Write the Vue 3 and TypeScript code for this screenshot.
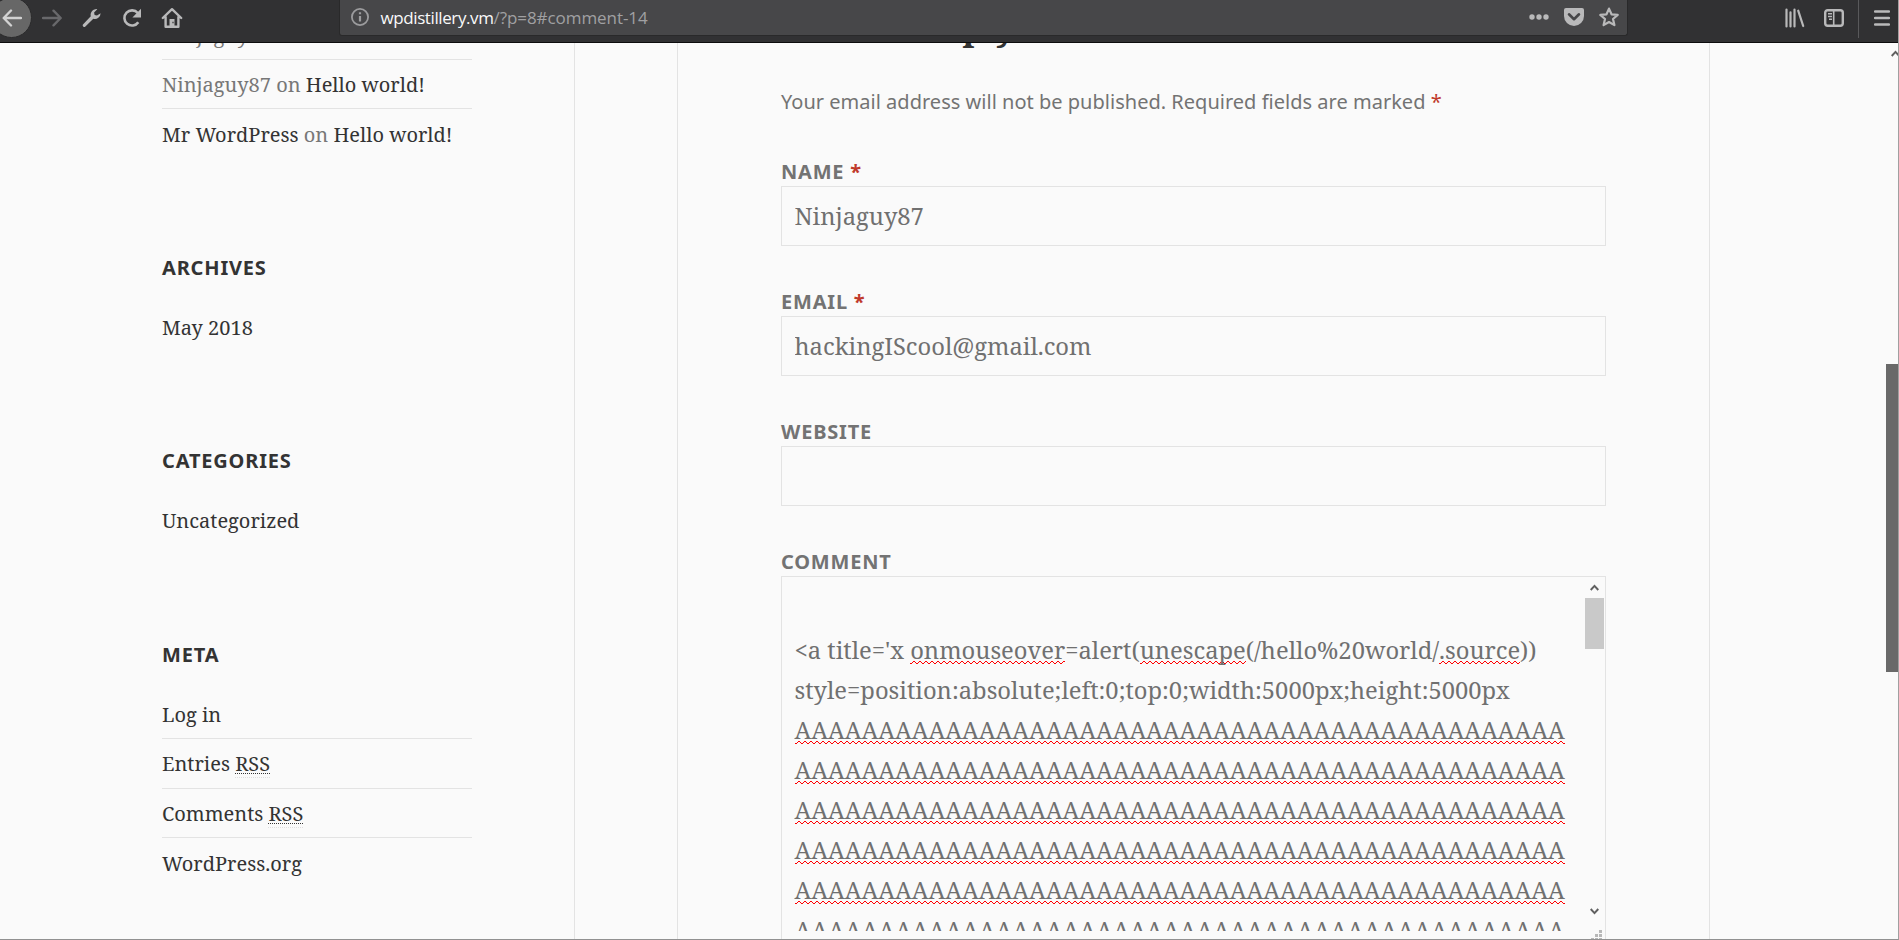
<script setup lang="ts">
interface Part {
  text: string
  kind?: 'muted' | 'abbr' | 'wavy'
}
interface Widget {
  title?: string
  items: Part[][]
}

const widgets: Widget[] = [
  {
    items: [
      [{ text: 'Ninjaguy87', kind: 'muted' }],
      [{ text: 'Ninjaguy87 on ', kind: 'muted' }, { text: 'Hello world!' }],
      [{ text: 'Mr WordPress' }, { text: ' on ', kind: 'muted' }, { text: 'Hello world!' }],
    ],
  },
  { title: 'Archives', items: [[{ text: 'May 2018' }]] },
  { title: 'Categories', items: [[{ text: 'Uncategorized' }]] },
  {
    title: 'Meta',
    items: [
      [{ text: 'Log in' }],
      [{ text: 'Entries ' }, { text: 'RSS', kind: 'abbr' }],
      [{ text: 'Comments ' }, { text: 'RSS', kind: 'abbr' }],
      [{ text: 'WordPress.org' }],
    ],
  },
]

const fields = [
  { id: 'name', label: 'Name', required: true, value: 'Ninjaguy87' },
  { id: 'email', label: 'Email', required: true, value: 'hackingIScool@gmail.com' },
  { id: 'website', label: 'Website', required: false, value: '' },
]

const filler: Part[][] = Array.from({ length: 6 }, () => [{ text: 'A'.repeat(46), kind: 'wavy' }])
const commentLines: Part[][] = [
  [],
  [
    { text: "<a title='x " },
    { text: 'onmouseover', kind: 'wavy' },
    { text: '=alert(' },
    { text: 'unescape', kind: 'wavy' },
    { text: '(/hello%20world/' },
    { text: '.source', kind: 'wavy' },
    { text: '))' },
  ],
  [{ text: 'style=position:absolute;left:0;top:0;width:5000px;height:5000px' }],
  ...filler,
]
</script>

<template>
  <div class="window">
    <header class="toolbar">
      <div class="nav">
        <span class="back">
          <svg width="20" height="20" viewBox="0 0 20 20"><path d="M19 10H2.5M9 2.5 1.7 10 9 17.5" /></svg>
        </span>
        <svg class="forward" width="20" height="20" viewBox="0 0 20 20"><path d="M1 10h17M11.5 2.7 18.7 10l-7.2 7.3" /></svg>
        <svg class="wrench" width="20" height="20" viewBox="0 0 20 20">
          <path class="fill" d="M18.6 5.2 15 7.6l-2.4-.6-.5-2.4L15.3 1.2A5.7 5.7 0 0 0 8.8 8.3L1.2 16.2a1.5 1.5 0 0 0 2.2 2.2L11.3 10.7A5.7 5.7 0 0 0 18.6 5.2z" />
        </svg>
        <svg class="reload" width="20" height="20" viewBox="0 0 20 20">
          <path d="M16.3 14.2A7.6 7.6 0 1 1 15.8 5" />
          <path class="fill" d="M19 .8v8.6h-8.6z" />
        </svg>
        <svg class="home" width="22" height="22" viewBox="0 0 22 22">
          <path d="M1.8 11 11 2.2 20.2 11M4.6 10v9.8h12.8V10" />
          <path class="fill" fill-rule="evenodd" d="M8.5 12h5v8h-5zM11.4 14.8v1.4h1.2v-1.4z" />
        </svg>
      </div>
      <div class="urlbar">
        <svg class="info" width="20" height="20" viewBox="0 0 20 20">
          <circle cx="10" cy="10" r="8.1" />
          <path d="M10 9v5.5M10 5.3v2" />
        </svg>
        <span class="url"><b>wpdistillery.vm</b><i>/?p=8#comment-14</i></span>
        <svg class="dots" width="20" height="20" viewBox="0 0 20 20">
          <circle cx="3" cy="10" r="2.7" /><circle cx="10" cy="10" r="2.7" /><circle cx="17" cy="10" r="2.7" />
        </svg>
        <svg class="pocket" width="20" height="20" viewBox="0 0 20 20">
          <path class="fill" d="M2 1h16a2 2 0 0 1 2 2v6a10 10 0 0 1-20 0V3a2 2 0 0 1 2-2z" />
          <path class="chev" d="m5 7.3 5 4.9 5-4.9" />
        </svg>
        <svg class="star" width="20" height="20" viewBox="0 0 20 20">
          <path d="m10 1.6 2.5 5.7 6.2.6-4.7 4.1 1.4 6.1L10 15l-5.4 3.1L6 12 1.3 7.9l6.2-.6z" />
        </svg>
      </div>
      <div class="tools">
        <svg class="library" width="20" height="20" viewBox="0 0 20 20">
          <path d="M1.5 1.5v17M5.5 4.3v14.2M9.5 1.5v17M13.2 2.7l5 15.3" />
        </svg>
        <svg class="side" width="20" height="20" viewBox="0 0 20 20">
          <rect x="1.2" y="2.2" width="17.6" height="15.6" rx="2.5" />
          <path class="bar" d="M9.7 3v14" />
          <path class="entries" d="M4 5.7h4M4 8.5h4M5 11.3h3" />
        </svg>
        <span class="divider"></span>
        <svg class="menu" width="16" height="18" viewBox="0 0 16 18"><path d="M1 2.5h14M1 9h14M1 15.5h14" /></svg>
      </div>
    </header>

    <main class="viewport">
      <aside class="sidebar">
        <section v-for="(w, i) in widgets" :key="i" class="widget" :class="{ cut: !w.title }">
          <h2 v-if="w.title">{{ w.title }}</h2>
          <ul>
            <li v-for="(item, j) in w.items" :key="j"><span v-for="(p, k) in item" :key="k" :class="p.kind">{{ p.text }}</span></li>
          </ul>
        </section>
      </aside>

      <article class="respond">
        <h3>Leave a Reply</h3>
        <p class="note">Your email address will not be published. Required fields are marked <em>*</em></p>
        <div v-for="f in fields" :key="f.id" class="field">
          <label :for="f.id">{{ f.label }}<em v-if="f.required"> *</em></label>
          <input :id="f.id" type="text" :value="f.value" spellcheck="false" />
        </div>
        <div class="field">
          <label>Comment</label>
          <div class="textarea">
            <div class="lines">
              <p v-for="(line, i) in commentLines" :key="i"><span v-for="(p, k) in line" :key="k" :class="p.kind">{{ p.text }}</span></p>
            </div>
            <div class="scroll">
              <svg width="9" height="7" viewBox="0 0 9 7"><path d="M.7 6 4.5 1.9 8.3 6" /></svg>
              <span class="thumb"></span>
              <svg width="9" height="7" viewBox="0 0 9 7"><path d="M.7 1 4.5 5.1 8.3 1" /></svg>
            </div>
            <svg class="grip" width="12" height="12" viewBox="0 0 12 12">
              <path d="M8 0h3v3H8zM4 4h3v3H4zM8 4h3v3H8zM0 8h3v3H0zM4 8h3v3H4zM8 8h3v3H8z" />
            </svg>
          </div>
        </div>
      </article>

      <div class="page-scroll">
        <svg width="9" height="7" viewBox="0 0 9 7"><path d="M.7 6 4.5 1.9 8.3 6" /></svg>
        <span class="page-thumb"></span>
      </div>
    </main>
    <div class="frame-edge"></div>
  </div>
</template>

<style>
body {
  margin: 0;
  overflow: hidden;
}
</style>

<style scoped>
* {
  box-sizing: border-box;
}
.window {
  position: relative;
  width: 1899px;
  height: 940px;
  overflow: hidden;
  display: flex;
  flex-direction: column;
  background: #fafafa;
  font-family: 'Noto Serif', 'DejaVu Serif Condensed', serif;
  color: #333;
}
.frame-edge {
  position: absolute;
  inset: 0;
  border-right: 1px solid #a0a0a0;
  border-bottom: 1px solid #919191;
  pointer-events: none;
}
svg {
  display: block;
  flex: none;
  fill: none;
  stroke: #b9b9ba;
  stroke-width: 2.4;
  stroke-linecap: round;
  stroke-linejoin: round;
}
.fill {
  fill: #b9b9ba;
  stroke: none;
}

.toolbar {
  flex: none;
  display: flex;
  height: 43px;
  background: #313133;
  border-bottom: 1px solid #0c0c0d;
}
.nav {
  display: flex;
  align-items: center;
  width: 339px;
  height: 35px;
}
.back {
  flex: none;
  display: flex;
  align-items: center;
  justify-content: center;
  width: 41px;
  height: 41px;
  margin-left: -9px;
  border-radius: 50%;
  background: #676767;
  border: 1px solid #2a2a2b;
}
.back svg {
  stroke: #d2d2d2;
}
.forward {
  margin-left: 10px;
  stroke: #68686b;
}
.wrench {
  margin-left: 20px;
}
.reload {
  margin-left: 20px;
}
.reload path:first-child {
  stroke-width: 2.6;
  stroke-linecap: butt;
}
.home {
  margin-left: 19px;
}
.urlbar {
  display: flex;
  align-items: center;
  width: 1289px;
  height: 36px;
  padding: 0 8px 1px 10px;
  background: #474749;
  border: 1px solid #29292a;
  border-top: 0;
  border-radius: 0 0 3px 3px;
}
.info {
  stroke: #9c9c9e;
  stroke-width: 1.8;
}
.info path {
  stroke-width: 2.2;
  stroke-linecap: butt;
}
.url {
  flex: 1;
  margin: 1px 0 0 10.5px;
  font: 17px/24px 'Open Sans', 'Noto Sans', sans-serif;
  color: #a0a0a2;
}
.url b,
.url i {
  font-weight: 400;
  font-style: normal;
}
.url b {
  color: #f9f9fa;
  letter-spacing: -0.4px;
}
.url i {
  letter-spacing: -0.07px;
}
.dots {
  fill: #b9b9ba;
  stroke: none;
}
.pocket {
  margin-left: 15px;
}
.chev {
  stroke: #474749;
  stroke-width: 2.6;
}
.star {
  margin-left: 15px;
  stroke-width: 2.2;
}
.tools {
  display: flex;
  align-items: center;
  height: 35px;
  margin-left: 157px;
}
.library {
  stroke-width: 2.2;
}
.side {
  margin-left: 19px;
}
.side .bar {
  stroke-width: 1.6;
}
.side .entries {
  stroke-width: 1.4;
  stroke-linecap: butt;
}
.divider {
  align-self: flex-start;
  width: 1px;
  height: 38px;
  margin: 0 15px 0 14px;
  background: #59595b;
}

.viewport {
  flex: 1;
  min-height: 0;
  display: flex;
  overflow: hidden;
}
.sidebar {
  flex: none;
  width: 575px;
  padding-left: 162px;
  border-right: 1px solid #e3e3e3;
}
.widget {
  width: 310px;
  margin-bottom: 103.4px;
}
.cut {
  margin-top: -33.5px;
}
h2 {
  margin: 0 0 30px;
  font: 700 20px/30px 'Noto Sans', 'Open Sans', sans-serif;
  letter-spacing: 0.82px;
  text-transform: uppercase;
}
ul {
  margin: 0;
  padding: 0;
  list-style: none;
  font-size: 20px;
  line-height: 30px;
}
li {
  padding: 10.1px 0 8.4px;
  border-top: 1px solid #e3e3e3;
  white-space: pre;
}
.widget:not(.cut) li:first-child {
  padding-top: 0;
  border-top: 0;
}
li:last-child {
  padding-bottom: 0;
}
.widget:last-child li:last-child {
  padding-top: 10.8px;
}
.muted {
  color: #777;
}
.abbr {
  text-decoration: underline dotted #333 1px;
  text-underline-offset: 2px;
  text-decoration-skip-ink: none;
  border-bottom: 1px dotted #e0e0e0;
}

.respond {
  flex: none;
  width: 1033px;
  margin-left: 102px;
  padding: 0 103px;
  border: solid #e3e3e3;
  border-width: 0 1px;
}
h3 {
  height: 43.2px;
  margin: -40.5px 0 41.5px;
  font-size: 33.6px;
  line-height: 48px;
}
.note {
  margin: 0 0 38px;
  font: 20px/30px 'Noto Sans', 'Open Sans', sans-serif;
  letter-spacing: 0.015px;
  color: #737373;
}
em {
  font-style: normal;
  color: #c0392b;
}
.field {
  height: 90.8px;
  margin-bottom: 39.2px;
}
label {
  display: block;
  height: 30.8px;
  padding-top: 1.6px;
  font: 700 20px/30px 'Noto Sans', 'Open Sans', sans-serif;
  letter-spacing: 0.8px;
  text-transform: uppercase;
  white-space: pre;
  color: #737373;
}
input {
  display: block;
  width: 825px;
  height: 60px;
  margin: 0;
  padding: 0 12.5px;
  border: 1px solid #e3e3e3;
  border-radius: 0;
  outline: 0;
  background: transparent;
  font: 23.75px 'Noto Serif', 'DejaVu Serif Condensed', serif;
  color: #707070;
}
.textarea {
  position: relative;
  display: flex;
  width: 825px;
  height: 380px;
  border: 1px solid #e3e3e3;
}
.lines {
  flex: 1;
  height: 354px;
  padding: 13.5px 0 0 12.5px;
  overflow: hidden;
  font-size: 23.75px;
  line-height: 40px;
  color: #707070;
}
.lines p {
  height: 40px;
  margin: 0;
  white-space: pre;
}
.wavy {
  background: url("data:image/svg+xml,%3Csvg xmlns='http://www.w3.org/2000/svg' width='6' height='3' shape-rendering='crispEdges'%3E%3Cpath fill='%23f00' d='M0 2h2v1H0zM2 1h1v1H2zM3 0h2v1H3zM5 1h1v1H5z'/%3E%3C/svg%3E") left bottom 2px repeat-x;
}
.scroll {
  flex: none;
  display: flex;
  flex-direction: column;
  align-items: center;
  width: 19px;
  height: 338px;
  margin-right: 1px;
  padding-top: 7px;
}
.scroll svg,
.page-scroll svg {
  stroke: #606060;
  stroke-width: 2;
  stroke-linecap: butt;
  stroke-linejoin: miter;
}
.thumb {
  width: 19px;
  height: 51px;
  margin: 7px 0 auto;
  background: #c9c9c9;
}
.grip {
  position: absolute;
  right: 2px;
  top: 353px;
  fill: #b8b8b8;
  stroke: none;
}
.page-scroll {
  display: flex;
  flex-direction: column;
  width: 13px;
  margin-left: auto;
  padding-top: 7px;
}
.page-scroll svg {
  margin-left: 5px;
}
.page-thumb {
  width: 13px;
  height: 308px;
  margin-top: 307px;
  background: #696969;
}
</style>
